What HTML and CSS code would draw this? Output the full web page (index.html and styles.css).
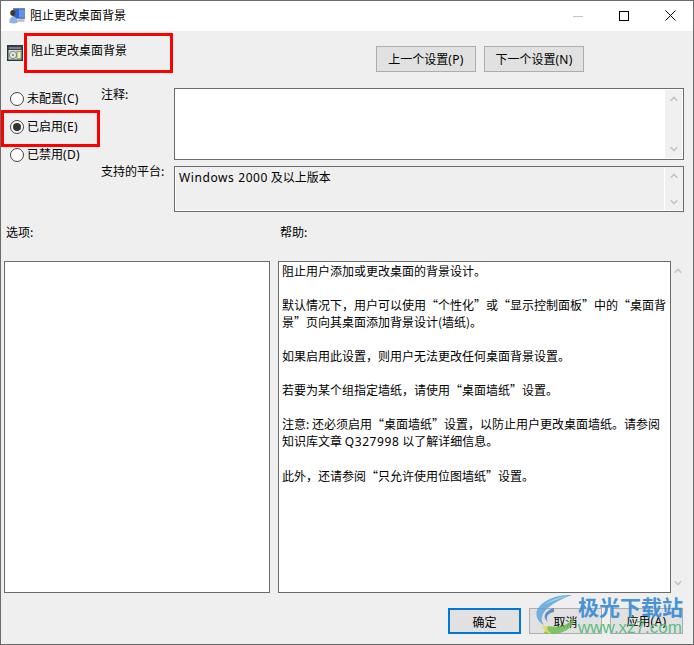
FILE: index.html
```html
<!DOCTYPE html>
<html lang="zh-CN">
<head>
<meta charset="utf-8">
<title>阻止更改桌面背景</title>
<link rel="stylesheet" href="styles.css">
</head>
<body>
<div class="window">
  <div class="titlebar">
    <svg class="app-icon" viewBox="0 0 16 16" width="16" height="16">
      <rect x="4.5" y="0.5" width="11" height="10" fill="#2f62d6" stroke="#7d8a9a"/>
      <rect x="10" y="1.5" width="5" height="8" fill="#5f94ec"/>
      <rect x="9" y="11" width="6.5" height="1.5" fill="#c4cad0"/>
      <rect x="8" y="12.5" width="7.5" height="1" fill="#8f98a2"/>
      <path d="M1.2 5 C1.2 3 2.4 2 3.8 2 C5.4 2 6.4 3.2 6.4 5 C6.4 7 5.2 8 3.8 8 C2.4 8 1.2 7 1.2 5 Z" fill="#4a3420"/>
      <path d="M0.4 14.8 C0.4 10.5 1.8 8.4 3.9 8.4 C6.6 8.4 8.6 10.5 8.6 14.8 C6 15.6 3 15.6 0.4 14.8 Z" fill="#8db4de"/>
    </svg>
    <span class="title">阻止更改桌面背景</span>
    <div class="caption">
      <span class="cap-btn"><svg viewBox="0 0 10 10" width="10" height="10"><path d="M0 5.5H10" stroke="#c4c4c4"/></svg></span>
      <span class="cap-btn"><svg viewBox="0 0 10 10" width="10" height="10"><rect x="0.5" y="0.5" width="9" height="9" fill="none" stroke="#000"/></svg></span>
      <span class="cap-btn"><svg viewBox="0 0 11 11" width="11" height="11"><path d="M0.5 0.5L10.5 10.5M10.5 0.5L0.5 10.5" stroke="#000" stroke-width="1"/></svg></span>
    </div>
  </div>

  <div class="content">
    <div class="header">
      <svg class="policy-icon" viewBox="0 0 16 16" width="16" height="16">
        <rect x="0.5" y="0.5" width="15" height="15" fill="#2f4a4a" stroke="#26383a"/>
        <rect x="2" y="2" width="12" height="2" fill="#8c6f9c"/>
        <rect x="1.5" y="5" width="13" height="9.5" fill="#d8d8c8"/>
        <circle cx="6" cy="10" r="3.6" fill="#e6e6e6" stroke="#7a8a7a"/>
        <circle cx="6" cy="10" r="1" fill="#6a7a6a"/>
        <rect x="10" y="6.5" width="4" height="7" fill="#f2eeb0" stroke="#5a6a5a" stroke-width="0.6"/>
      </svg>
      <span class="policy-name">阻止更改桌面背景</span>
      <div class="nav">
        <button class="btn nav-btn">上一个设置<span class="lat">(P)</span></button>
        <button class="btn nav-btn">下一个设置<span class="lat">(N)</span></button>
      </div>
    </div>

    <div class="config">
      <div class="radios">
        <div class="radio"><span class="dot"></span><span>未配置<span class="lat">(C)</span></span></div>
        <div class="radio"><span class="dot checked"></span><span>已启用<span class="lat">(E)</span></span></div>
        <div class="radio"><span class="dot"></span><span>已禁用<span class="lat">(D)</span></span></div>
      </div>
      <div class="fields">
        <span class="field-label">注释:</span>
        <div class="box comment">
          <div class="box-text"></div>
          <div class="vbar">
            <svg class="chev" viewBox="0 0 8 6" width="8" height="6"><path d="M0.7 4.8L4 1.5L7.3 4.8" fill="none" stroke="#c4c4c4" stroke-width="1.6"/></svg>
            <svg class="chev" viewBox="0 0 8 6" width="8" height="6"><path d="M0.7 1.2L4 4.5L7.3 1.2" fill="none" stroke="#c4c4c4" stroke-width="1.6"/></svg>
          </div>
        </div>
        <span class="field-label platform-label">支持的平台:</span>
        <div class="box platform">
          <div class="box-text"><span class="lat wide">Windows 2000</span> 及以上版本</div>
          <div class="vbar">
            <svg class="chev" viewBox="0 0 8 6" width="8" height="6"><path d="M0.7 4.8L4 1.5L7.3 4.8" fill="none" stroke="#c4c4c4" stroke-width="1.6"/></svg>
            <svg class="chev" viewBox="0 0 8 6" width="8" height="6"><path d="M0.7 1.2L4 4.5L7.3 1.2" fill="none" stroke="#c4c4c4" stroke-width="1.6"/></svg>
          </div>
        </div>
      </div>
    </div>

    <div class="panes">
      <div class="pane-label">选项:</div>
      <div class="pane-label">帮助:</div>
      <div class="listbox"></div>
      <div class="help-wrap">
        <div class="help">
          <p>阻止用户添加或更改桌面的背景设计。</p>
          <p>默认情况下，用户可以使用“个性化”或“显示控制面板”中的“桌面背景”页向其桌面添加背景设计(墙纸)。</p>
          <p>如果启用此设置，则用户无法更改任何桌面背景设置。</p>
          <p>若要为某个组指定墙纸，请使用“桌面墙纸”设置。</p>
          <p>注意: 还必须启用“桌面墙纸”设置，以防止用户更改桌面墙纸。请参阅知识库文章 <span class="lat wide">Q327998</span> 以了解详细信息。</p>
          <p>此外，还请参阅“只允许使用位图墙纸”设置。</p>
        </div>
        <div class="help-bar">
          <svg class="chev" viewBox="0 0 8 6" width="8" height="6"><path d="M0.7 4.8L4 1.5L7.3 4.8" fill="none" stroke="#c4c4c4" stroke-width="1.6"/></svg>
          <svg class="chev" viewBox="0 0 8 6" width="8" height="6"><path d="M0.7 1.2L4 4.5L7.3 1.2" fill="none" stroke="#c4c4c4" stroke-width="1.6"/></svg>
        </div>
      </div>
    </div>

    <div class="footer">
      <button class="btn foot-btn primary">确定</button>
      <button class="btn foot-btn">取消</button>
      <button class="btn foot-btn">应用<span class="lat">(A)</span></button>
    </div>
  </div>

  <div class="mark mark-title"></div>
  <div class="mark mark-radio"></div>

  <div class="watermark">
    <svg class="wm-logo" viewBox="0 0 48 48" width="48" height="48">
      <path d="M42 5 C28 4 12 10 7 20 C5 26 8 32 14 35 C10 30 11 24 18 18 C25 12 33 8 42 5 Z" fill="#5aa5dc" opacity="0.85"/>
      <path d="M38 6 C28 7 20 10 14 15 C20 12 28 9 38 6 Z" fill="#a4dcf2" opacity="0.9"/>
      <path d="M24 18 C14 21 12 28 18 32 C15 27 18 23 24 22 Z" fill="#3f7fc0" opacity="0.85"/>
      <path d="M14 43 C26 46 40 42 44 31 C44 30 43 29 42 29 C38 36 28 38 18 36 Z" fill="#6cbc54" opacity="0.85"/>
      <path d="M12 36 C13 40 16 43 22 44 C18 41 16 38 18 36 Z" fill="#e3dc5a" opacity="0.9"/>
    </svg>
    <div class="wm-text">
      <span class="wm-cn">极光下载站</span>
      <span class="wm-url">www.xz7.com</span>
    </div>
  </div>
</div>
</body>
</html>
```

FILE: styles.css
```css
* { box-sizing: border-box; }

html, body {
  margin: 0;
  padding: 0;
  background: #efefef;
}

body {
  font-family: "Noto Sans CJK SC", "Noto Sans", sans-serif;
  font-size: 12px;
  line-height: 17px;
  color: #000;
}

.lat { font-family: "Noto Sans", sans-serif; letter-spacing: 0.3px; }

.lat.wide { letter-spacing: 0.6px; }

.window {
  position: relative;
  width: 694px;
  height: 645px;
  border: 1px solid #6b6b6b;
  background: #efefef;
  overflow: hidden;
  display: flex;
  flex-direction: column;
}

.titlebar {
  height: 30px;
  flex: none;
  background: #fff;
  display: flex;
  align-items: center;
  padding-left: 8px;
}

.app-icon { flex: none; margin-right: 5px; }

.title { flex: 1; margin-top: -3px; }

.caption { display: flex; height: 100%; margin-top: -1px; }

.cap-btn {
  width: 46px;
  display: flex;
  align-items: center;
  justify-content: center;
}

.content {
  flex: 1;
  display: flex;
  flex-direction: column;
}

.header {
  display: flex;
  align-items: flex-start;
  padding: 13px 0 0 6px;
  height: 41px;
}

.policy-icon { flex: none; margin: 1px 8px 0 0; }

.policy-name { flex: 1; margin-top: -3px; }

.nav {
  display: flex;
  gap: 8px;
  margin: 2px 109px 0 0;
}

.btn {
  font: inherit;
  color: #000;
  background: #e1e1e1;
  border: 1px solid #adadad;
  padding: 0;
  height: 26px;
}

.nav-btn { width: 100px; }

.config {
  display: flex;
  padding-top: 16px;
  height: 140px;
}

.radios {
  width: 100px;
  flex: none;
  padding: 1px 0 0 9px;
  display: flex;
  flex-direction: column;
  gap: 11px;
}

.radio {
  display: flex;
  align-items: center;
  gap: 3px;
  height: 17px;
}

.dot {
  width: 14px;
  height: 14px;
  flex: none;
  margin-top: 2px;
  border-radius: 50%;
  border: 1px solid #444;
  background: #fff;
  display: flex;
  align-items: center;
  justify-content: center;
}

.dot.checked::after {
  content: "";
  width: 8px;
  height: 8px;
  border-radius: 50%;
  background: #333;
}

.fields {
  display: grid;
  grid-template-columns: 73px 510px;
  grid-template-rows: 72px 46px;
  row-gap: 6px;
}

.field-label { margin-top: -3px; }

.platform-label { margin-top: -4px; }

.box {
  border: 1px solid #6b6b6b;
  background: #fff;
  display: flex;
  padding: 1px;
}

.box-text {
  flex: 1;
  padding: 0 3px;
}

.platform {
  background: #efefef;
  box-shadow: inset 1px 0 #fff, inset 0 -1px #fff;
}

.vbar {
  width: 17px;
  flex: none;
  background: #f0f0f0;
  display: flex;
  flex-direction: column;
  align-items: center;
  justify-content: space-between;
  padding: 6px 0;
}

.platform .vbar { border-left: 1px solid #fff; width: 18px; padding: 5px 0; }

.chev { display: block; }

.panes {
  display: grid;
  grid-template-columns: 266px 406px;
  grid-template-rows: 38px 332px;
  column-gap: 8px;
  padding: 11px 0 0 3px;
}

.pane-label { padding-left: 2px; }

.listbox {
  border: 1px solid #6b6b6b;
  background: #fff;
}

.help-wrap { display: flex; }

.help {
  width: 393px;
  flex: none;
  border: 1px solid #6b6b6b;
  background: #fff;
  padding: 0 3px;
  overflow: hidden;
}

.help p { margin: 0 0 17px; }

.help-bar {
  flex: 1;
  display: flex;
  flex-direction: column;
  align-items: center;
  justify-content: space-between;
  padding: 7px 0;
}

.footer {
  display: flex;
  justify-content: flex-end;
  gap: 8px;
  padding: 15px 10px 0 0;
}

.foot-btn { width: 73px; }

.foot-btn.primary { border: 2px solid #0078d7; }

.mark {
  position: absolute;
  border: 3px solid #f00;
}

.mark-title { left: 23px; top: 32px; width: 149px; height: 40px; }

.mark-radio { left: 0; top: 109px; width: 99px; height: 37px; }

.watermark {
  position: absolute;
  left: 529px;
  top: 589px;
  display: flex;
  align-items: flex-start;
}

.wm-text {
  display: flex;
  flex-direction: column;
  margin-top: 4px;
}

.wm-cn {
  font-weight: 700;
  font-size: 21px;
  line-height: 25px;
  color: #3f8fd2;
  opacity: 0.95;
}

.wm-url {
  font-family: "Liberation Sans", sans-serif;
  font-size: 17px;
  line-height: 18px;
  color: #55bd7e;
  opacity: 0.95;
}
```
